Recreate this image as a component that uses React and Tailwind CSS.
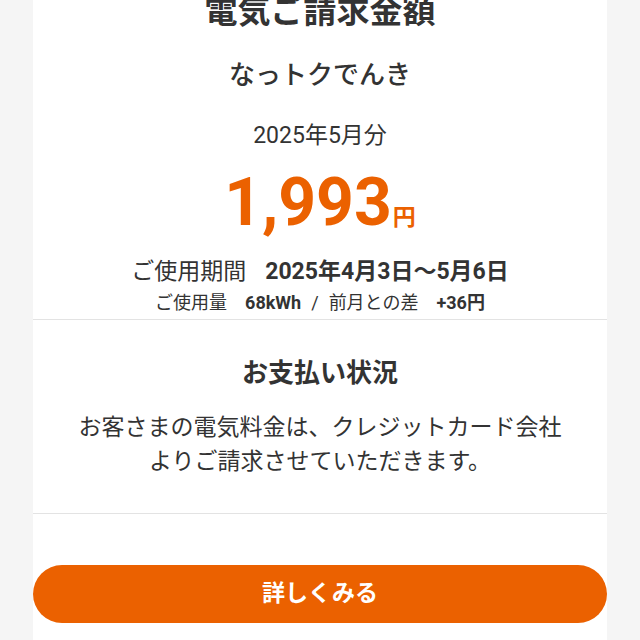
export default function App() {
  return (
    <div
      className="min-h-[640px] bg-[#f5f5f5] overflow-hidden"
      style={{ fontFamily: "Roboto, 'Noto Sans CJK JP', sans-serif" }}
    >
      <div className="mx-[33px] bg-white text-[#333333] min-h-[640px]">
        {/* 請求金額 */}
        <section className="flex flex-col items-center pb-[3px]">
          <h1 className="-mt-[8px] text-[33px] leading-[40px] font-bold">電気ご請求金額</h1>
          <p className="mt-[25px] text-[26px] leading-[36px] font-medium">なっトクでんき</p>
          <p className="mt-[28px] text-[23px] leading-[30px]">2025年5月分</p>
          <p className="mt-[12px] flex items-baseline text-[#eb6100] font-bold">
            <span className="text-[66px] leading-[80px]">1,993</span>
            <span className="text-[23px] ml-[1px]">円</span>
          </p>
          <p className="mt-[14px] text-[23px] leading-[30px]">
            ご使用期間<span className="ml-[19px] font-bold">2025年4月3日〜5月6日</span>
          </p>
          <p className="mt-[3px] text-[18px] leading-[26px]">
            ご使用量<span className="ml-[18px] font-bold">68kWh</span>
            <span className="mx-[10px]">/</span>
            前月との差<span className="ml-[18px] font-bold">+36円</span>
          </p>
        </section>

        {/* お支払い状況 */}
        <section className="border-t border-[#e3e3e3] flex flex-col items-center pt-[35px] pb-[34px]">
          <h2 className="text-[26px] leading-[36px] font-bold">お支払い状況</h2>
          <p className="mt-[20px] text-[23px] leading-[34px] text-center">
            お客さまの電気料金は、クレジットカード会社
            <br />
            よりご請求させていただきます。
          </p>
        </section>

        <div className="border-t border-[#e3e3e3] pt-[51px]">
          <button className="w-full h-[58px] rounded-full bg-[#eb6100] text-white text-[23px] font-bold">
            詳しくみる
          </button>
        </div>
      </div>
    </div>
  );
}
